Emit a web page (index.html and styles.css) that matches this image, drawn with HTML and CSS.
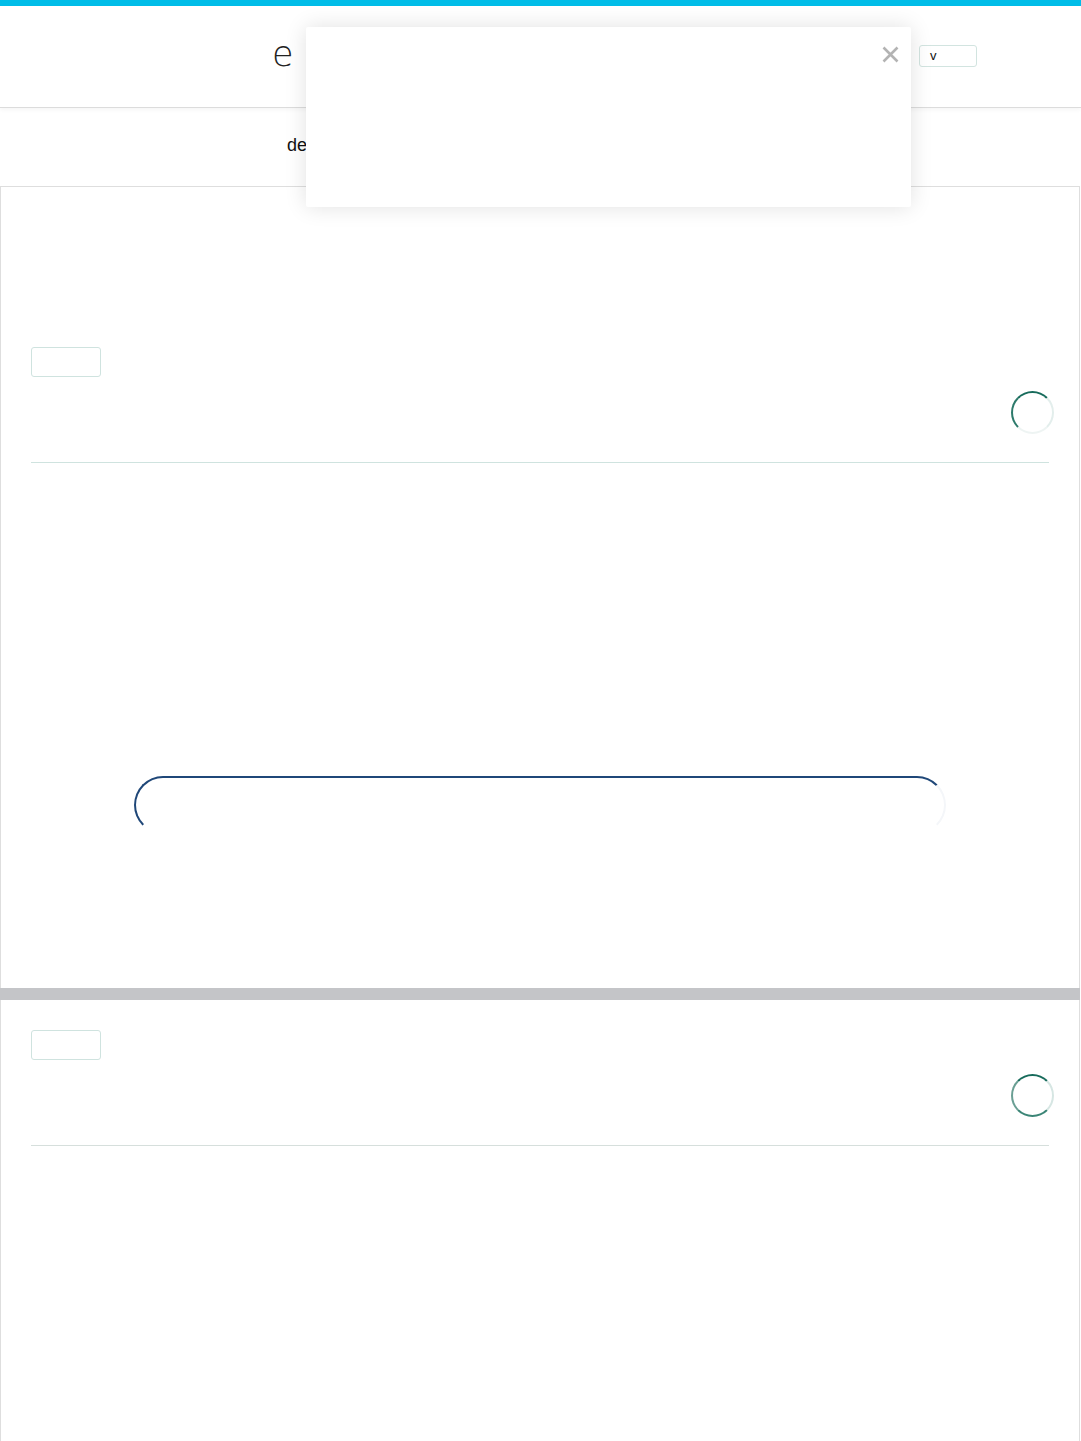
FILE: index.html
```html
<!DOCTYPE html>
<html lang="en">
<head>
  <meta charset="UTF-8" />
  <meta name="viewport" content="width=device-width, initial-scale=1.0" />
  <title>Shop</title>
  <link rel="stylesheet" href="styles.css">
</head>
<body>
  <div class="topbar"></div>

  <header class="header">
    <div class="header-inner">
      <div class="logo">e <span class="logo-rest">c</span></div>
      <div class="lang-select">v</div>
    </div>
  </header>

  <nav class="nav">
    <span class="nav-link">de</span>
  </nav>

  <section class="panel panel-first">
    <div class="panel-tag"></div>
    <div class="panel-row">
      <div class="spinner"></div>
    </div>
    <div class="panel-divider"></div>
    <div class="pill-wrap">
      <div class="pill"></div>
    </div>
  </section>

  <div class="panel-gap"></div>

  <section class="panel panel-second">
    <div class="panel-tag"></div>
    <div class="panel-row">
      <div class="spinner spinner-alt"></div>
    </div>
    <div class="panel-divider panel-divider-grey"></div>
  </section>

  <div class="modal">
    <button class="modal-close" aria-label="Close">
      <svg width="17" height="17" viewBox="0 0 17 17">
        <path d="M1.5 1.5 L15.5 15.5 M15.5 1.5 L1.5 15.5" stroke="#b3b3b3" stroke-width="2.6" fill="none"/>
      </svg>
    </button>
  </div>
</body>
</html>
```

FILE: styles.css
```css
body {
  margin: 0;
  font-family: "Liberation Sans", Arial, sans-serif;
  background-color: #fff;
  color: #111;
}
.topbar {
  height: 6px;
  background-color: #00bde8;
}
.header {
  height: 101px;
  border-bottom: 1px solid #dcdcdc;
  box-shadow: 0 2px 4px rgba(0,0,0,0.04);
}
.header-inner {
  display: flex;
  align-items: center;
  height: 100%;
  padding: 0 104px 0 272px;
}
.logo {
  font-family: "DejaVu Sans", sans-serif;
  font-weight: 200;
  font-size: 35px;
  color: #222;
  margin-top: -6px;
  letter-spacing: 1px;
}
.logo-rest {
  color: #999;
}
.lang-select {
  margin-left: auto;
  width: 46px;
  height: 20px;
  border: 1px solid #d2e4e0;
  border-radius: 3px;
  font-size: 13px;
  line-height: 20px;
  padding-left: 10px;
  margin-top: -2px;
}
.nav {
  height: 78px;
  display: flex;
  align-items: center;
  padding-left: 287px;
}
.nav-link {
  font-size: 18px;
  color: #111;
  margin-top: -4px;
}
.panel {
  border: 1px solid #dedede;
  border-bottom: none;
  padding: 0 30px;
  margin-right: 1px;
}
.panel-first {
  padding-top: 160px;
  height: 641px;
}
.panel-second {
  border-top: none;
  padding-top: 30px;
  height: 411px;
}
.panel-tag {
  width: 68px;
  height: 28px;
  border: 1px solid #cfe3df;
  border-radius: 3px;
}
.panel-row {
  display: flex;
  justify-content: flex-end;
  margin: 14px -5px 28px 0;
}
.spinner {
  width: 39px;
  height: 39px;
  border: 2px solid;
  border-radius: 50%;
  border-color: #176b5b #e3eeec #eef4f3 #2d7a6b;
}
.spinner-alt {
  border-color: #176b5b #d6e6e3 #3b8576 #6a9f94;
}
.panel-divider {
  height: 1px;
  background-color: #cfe3df;
}
.panel-divider-grey {
  background-color: #d6dfdc;
}
.pill-wrap {
  display: flex;
  justify-content: center;
  margin-top: 313px;
}
.pill {
  width: 808px;
  height: 54px;
  border: 2px solid;
  border-color: #1f4778 #f4f6f9 #fff #1f4778;
  border-radius: 29px;
}
.panel-gap {
  height: 12px;
  background-color: #c4c5c8;
  margin-right: 1px;
}
.modal {
  position: absolute;
  left: 306px;
  top: 27px;
  width: 605px;
  height: 180px;
  background-color: #fff;
  box-shadow: 0 0 22px rgba(0,0,0,0.12);
  border-radius: 2px;
}
.modal-close {
  position: absolute;
  top: 19px;
  right: 11px;
  padding: 0;
  border: none;
  background: none;
  width: 19px;
  height: 19px;
  cursor: pointer;
}
```
